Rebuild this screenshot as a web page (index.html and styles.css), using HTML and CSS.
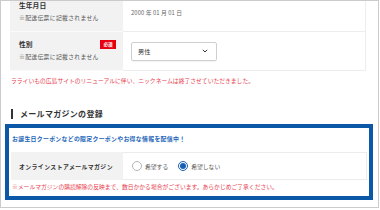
FILE: index.html
```html
<!DOCTYPE html>
<html lang="ja">
<head>
<meta charset="utf-8">
<link rel="stylesheet" href="styles.css">
</head>
<body>
<div class="frame">
  <div class="table">
    <div class="row r1">
      <div class="label">
        <div class="lt"><span>生年月日</span></div>
        <div class="note">※配送伝票に記載されません</div>
      </div>
      <div class="value"><span class="date">2000 年 01 月 01 日</span></div>
    </div>
    <div class="row r2">
      <div class="label">
        <div class="lt"><span>性別</span><span class="badge">必須</span></div>
        <div class="note">※配送伝票に記載されません</div>
      </div>
      <div class="value">
        <div class="select"><span>男性</span>
          <svg class="chev" width="6" height="4" viewBox="0 0 6 4"><path d="M0.8 0.8 L3 3 L5.2 0.8" fill="none" stroke="#333" stroke-width="1"/></svg>
        </div>
      </div>
    </div>
  </div>
  <p class="warn">ラライいもの広島サイトのリニューアルに伴い、ニックネームは終了させていただきました。</p>
  <h2 class="heading">メールマガジンの登録</h2>
  <div class="mailbox">
    <p class="promo">お誕生日クーポンなどの限定クーポンやお得な情報を配信中！</p>
    <div class="mrow">
      <div class="mlabel">オンラインストアメールマガジン</div>
      <div class="mvalue">
        <span class="radio"><span class="circle"></span>希望する</span>
        <span class="radio"><span class="circle on"></span>希望しない</span>
      </div>
    </div>
    <p class="warn mnote">※メールマガジンの購読解除の反映まで、数日かかる場合がございます。あらかじめご了承ください。</p>
  </div>
</div>
</body>
</html>
```

FILE: styles.css
```css
html, body {
  margin: 0;
  padding: 0;
  background: #fff;
}
body {
  width: 380px;
  height: 210px;
  overflow: hidden;
  font-family: "Noto Sans CJK JP", "Noto Sans", sans-serif;
  color: #333;
}
.frame {
  box-sizing: border-box;
  width: 379px;
  height: 208px;
  border: 1px solid #cbcbcb;
  overflow: hidden;
}
.table {
  margin: -8px 0 0 9px;
  width: 356px;
}
.row {
  display: flex;
}
.label {
  box-sizing: border-box;
  width: 113px;
  flex: none;
  background: #f2f2f2;
  padding: 7px 7px 8px 9px;
  border-bottom: 1px solid #fafafa;
}
.lt {
  display: flex;
  justify-content: space-between;
  align-items: center;
  height: 10px;
  font-size: 6.8px;
  font-weight: 700;
  line-height: 10px;
  color: #333;
}
.note {
  margin-top: 3px;
  font-size: 5.8px;
  line-height: 10px;
  letter-spacing: 0.35px;
  color: #555;
  white-space: nowrap;
}
.badge {
  display: flex;
  align-items: center;
  justify-content: center;
  width: 16px;
  height: 9px;
  background: #e60012;
  color: #fff;
  font-size: 4.6px;
  font-weight: 700;
  line-height: 9px;
}
.value {
  flex: 1;
  display: flex;
  align-items: center;
  padding-left: 8px;
  border-right: 1px solid #ededed;
  border-bottom: 1px solid #ededed;
}
.date {
  font-size: 5.8px;
  color: #666;
  letter-spacing: 0.1px;
}
.select {
  box-sizing: border-box;
  width: 86px;
  height: 19px;
  border: 1px solid #cfcfcf;
  border-radius: 2px;
  display: flex;
  align-items: center;
  justify-content: space-between;
  padding: 0 8px 0 6px;
  font-size: 6.2px;
  color: #333;
  box-shadow: 0 1px 1px rgba(0,0,0,0.05);
}
.chev {
  display: block;
}
.warn {
  margin: 6px 0 0 10px;
  font-size: 5.8px;
  line-height: 8px;
  color: #e8404f;
  white-space: nowrap;
}
.heading {
  margin: 24px 0 0 10px;
  padding-left: 7px;
  border-left: 2px solid #333;
  font-size: 8px;
  line-height: 10px;
  height: 10px;
  font-weight: 700;
  letter-spacing: 0.3px;
  color: #333;
}
.mailbox {
  box-sizing: border-box;
  margin: 5px 0 0 4px;
  width: 368px;
  height: 76px;
  border: 4px solid #0b58a8;
  padding: 7px 2px 0 2px;
}
.promo {
  margin: 0 0 0 1px;
  font-size: 5.9px;
  line-height: 8px;
  font-weight: 700;
  color: #1a64b8;
  letter-spacing: 0.3px;
  white-space: nowrap;
}
.mrow {
  display: flex;
  margin-top: 9px;
  height: 28px;
}
.mlabel {
  box-sizing: border-box;
  width: 112px;
  flex: none;
  background: #f2f2f2;
  display: flex;
  align-items: center;
  padding-left: 8px;
  font-size: 5.9px;
  font-weight: 700;
  letter-spacing: 0.4px;
  color: #333;
  white-space: nowrap;
}
.mvalue {
  flex: 1;
  display: flex;
  align-items: center;
  gap: 10px;
  padding-left: 9px;
  border: 1px solid #ececec;
  border-left: none;
}
.radio {
  display: flex;
  align-items: center;
  gap: 3px;
  font-size: 5.8px;
  color: #555;
  white-space: nowrap;
}
.circle {
  box-sizing: border-box;
  width: 10px;
  height: 10px;
  border-radius: 50%;
  border: 1px solid #b5b5b5;
  background: #fff;
  flex: none;
  display: flex;
  align-items: center;
  justify-content: center;
}
.circle.on {
  border: 1px solid #1a5fb4;
}
.circle.on::after {
  content: "";
  width: 6px;
  height: 6px;
  border-radius: 50%;
  background: #1a5fb4;
}
.mnote {
  margin: 3px 0 0 1px;
}
```
